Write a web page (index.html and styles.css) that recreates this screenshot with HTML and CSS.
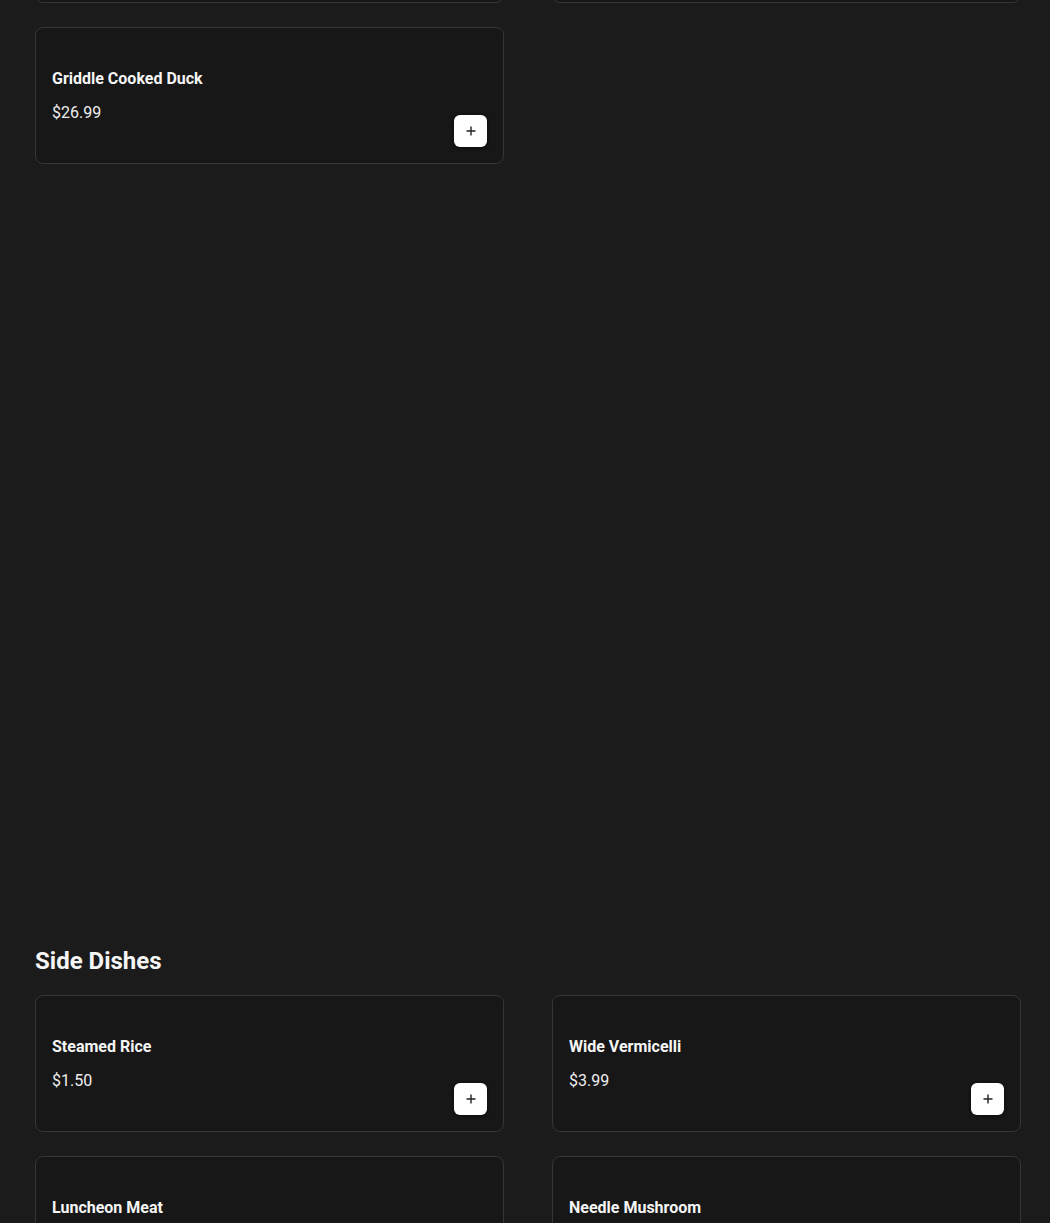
FILE: index.html
```html
<!DOCTYPE html>
<html lang="en">
<head>
    <meta charset="UTF-8">
    <meta name="viewport" content="width=device-width, initial-scale=1.0">
    <title>Menu</title>
    <link rel="stylesheet" href="styles.css">
</head>
<body>
    <div class="menu">
        <section class="category category-main">
            <div class="items">
                <!-- cards scrolled out of view above -->
                <div class="item"></div>
                <div class="item"></div>
                <div class="item">
                    <div class="info">
                        <h3>Griddle Cooked Duck</h3>
                        <p class="price">$26.99</p>
                    </div>
                    <button class="add" aria-label="Add">
                        <svg viewBox="0 0 12 12" width="12" height="12"><path d="M6 1.5v9M1.5 6h9" stroke="#222" stroke-width="1.4"/></svg>
                    </button>
                </div>
            </div>
        </section>

        <section class="category">
            <h2>Side Dishes</h2>
            <div class="items">
                <div class="item">
                    <div class="info">
                        <h3>Steamed Rice</h3>
                        <p class="price">$1.50</p>
                    </div>
                    <button class="add" aria-label="Add">
                        <svg viewBox="0 0 12 12" width="12" height="12"><path d="M6 1.5v9M1.5 6h9" stroke="#222" stroke-width="1.4"/></svg>
                    </button>
                </div>
                <div class="item">
                    <div class="info">
                        <h3>Wide Vermicelli</h3>
                        <p class="price">$3.99</p>
                    </div>
                    <button class="add" aria-label="Add">
                        <svg viewBox="0 0 12 12" width="12" height="12"><path d="M6 1.5v9M1.5 6h9" stroke="#222" stroke-width="1.4"/></svg>
                    </button>
                </div>
                <div class="item">
                    <div class="info">
                        <h3>Luncheon Meat</h3>
                        <p class="price">$4.99</p>
                    </div>
                    <button class="add" aria-label="Add">
                        <svg viewBox="0 0 12 12" width="12" height="12"><path d="M6 1.5v9M1.5 6h9" stroke="#222" stroke-width="1.4"/></svg>
                    </button>
                </div>
                <div class="item">
                    <div class="info">
                        <h3>Needle Mushroom</h3>
                        <p class="price">$4.99</p>
                    </div>
                    <button class="add" aria-label="Add">
                        <svg viewBox="0 0 12 12" width="12" height="12"><path d="M6 1.5v9M1.5 6h9" stroke="#222" stroke-width="1.4"/></svg>
                    </button>
                </div>
            </div>
        </section>
    </div>
</body>
</html>
```

FILE: styles.css
```css
*{
    box-sizing: border-box;
    font-family: Roboto, 'Liberation Sans', sans-serif;
}

html, body{
    margin: 0;
    background-color: #1b1b1b;
    color: #f2f2f2;
    overflow: hidden;
}

.menu{
    width: 986px;
    margin-left: 35px;
    margin-top: -134px;
}

.category-main{
    margin-bottom: 781px;
}

.category h2{
    margin: 0 0 18px;
    font-size: 24px;
    line-height: 32px;
    font-weight: 700;
    color: #f5f5f5;
}

.items{
    display: grid;
    grid-template-columns: 1fr 1fr;
    column-gap: 48px;
    row-gap: 24px;
}

.item{
    height: 137px;
    padding: 16px;
    display: flex;
    justify-content: space-between;
    align-items: flex-end;
    background-color: #171717;
    border: 1px solid #363636;
    border-radius: 8px;
}

.info{
    align-self: flex-start;
    padding-top: 23px;
}

.info h3{
    margin: 0;
    font-size: 16px;
    line-height: 24px;
    font-weight: 700;
    color: #f5f5f5;
}

.price{
    margin: 10px 0 0;
    font-size: 16px;
    line-height: 24px;
    color: #eeeeee;
}

.add{
    width: 33px;
    height: 32px;
    padding: 0;
    display: flex;
    align-items: center;
    justify-content: center;
    background-color: #ffffff;
    border: none;
    border-radius: 6px;
    box-shadow: 0 1px 4px rgba(0, 0, 0, 0.6);
    cursor: pointer;
}
```
